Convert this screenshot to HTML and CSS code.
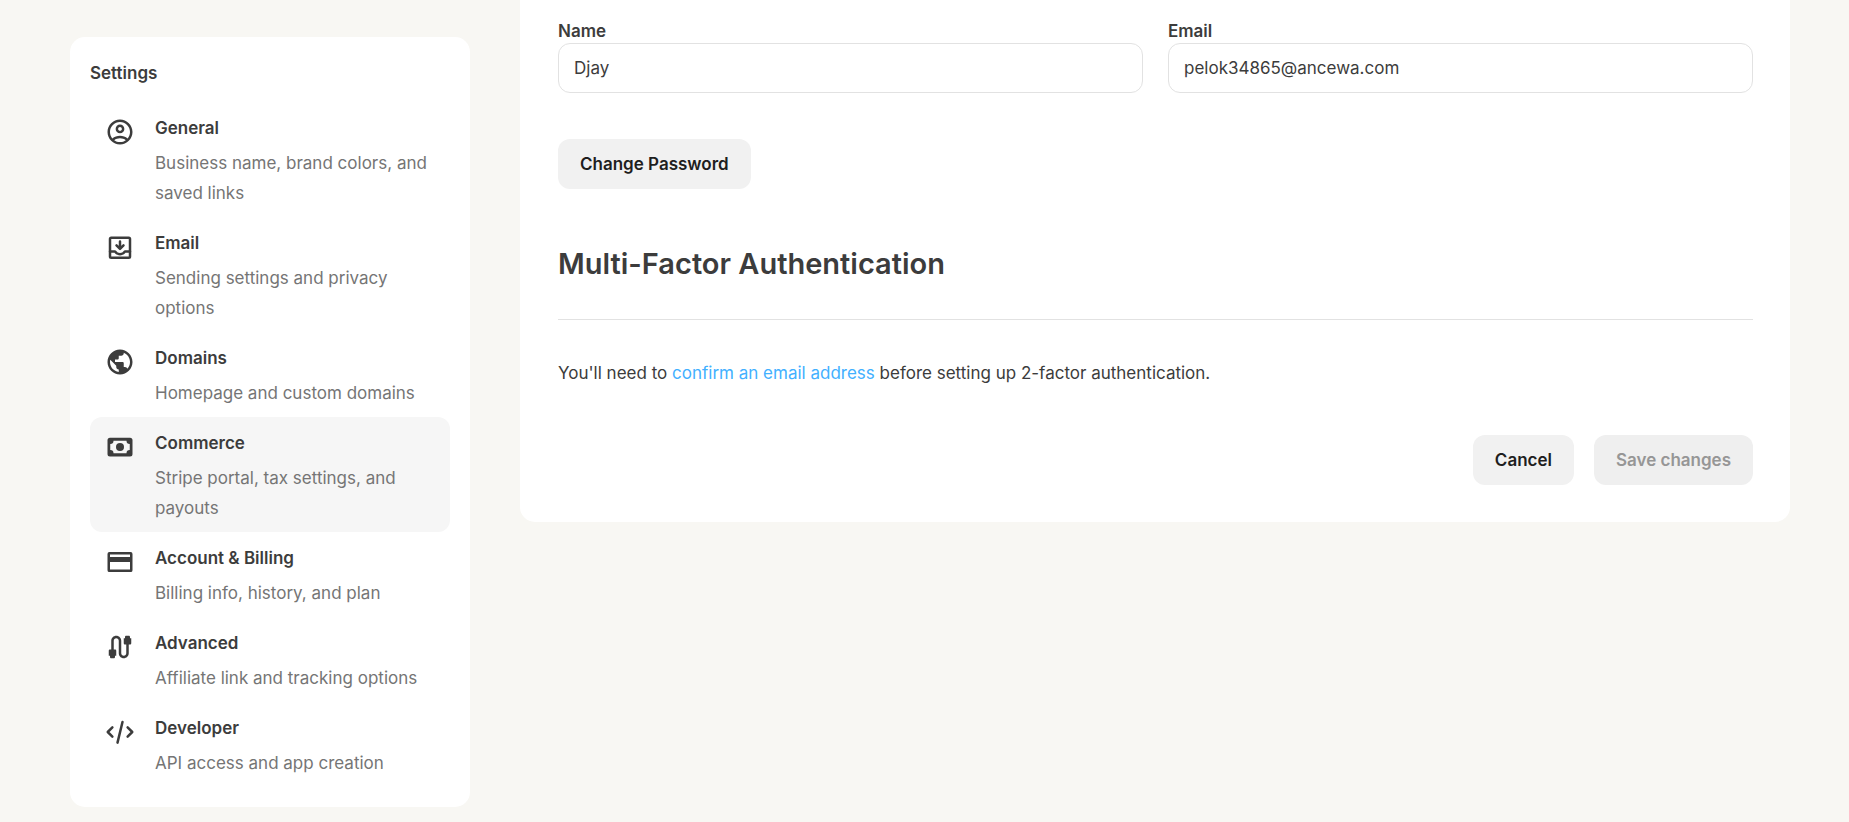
FILE: index.html
```html
<!DOCTYPE html>
<html lang="en">
<head>
    <meta charset="UTF-8">
    <meta name="viewport" content="width=device-width, initial-scale=1.0">
    <title>Settings</title>
    <link rel="stylesheet" href="styles.css">
</head>
<body>
    <div class="page">
        <nav class="sidebar">
            <h2>Settings</h2>
            <a class="nav-item" href="#general">
                <svg class="icon" viewBox="0 0 24 24"><path d="M12 2C6.48 2 2 6.48 2 12s4.48 10 10 10 10-4.48 10-10S17.52 2 12 2zM7.35 18.5C8.66 17.56 10.26 17 12 17s3.34.56 4.65 1.5C15.34 19.44 13.74 20 12 20s-3.34-.56-4.65-1.5zm10.79-1.38C16.45 15.8 14.32 15 12 15s-4.45.8-6.14 2.12C4.7 15.73 4 13.95 4 12c0-4.42 3.58-8 8-8s8 3.58 8 8c0 1.95-.7 3.73-1.86 5.12zM12 6c-1.93 0-3.5 1.57-3.5 3.5S10.07 13 12 13s3.5-1.57 3.5-3.5S13.93 6 12 6zm0 5c-.83 0-1.5-.67-1.5-1.5S11.17 8 12 8s1.5.67 1.5 1.5S12.83 11 12 11z"/></svg>
                <div>
                    <h3>General</h3>
                    <p>Business name, brand colors, and saved links</p>
                </div>
            </a>
            <a class="nav-item" href="#email-settings">
                <svg class="icon icon-line" viewBox="0 0 24 24"><rect x="4" y="4.5" width="16" height="16" rx="1"/><path d="M4 15.5h4c.9 1.4 2.2 2.2 4 2.2s3.1-.8 4-2.2h4M12 7.5V13M9.2 10.7l2.8 2.8 2.8-2.8"/></svg>
                <div>
                    <h3>Email</h3>
                    <p>Sending settings and privacy options</p>
                </div>
            </a>
            <a class="nav-item" href="#domains">
                <svg class="icon" viewBox="0 0 24 24"><path d="M12 2C6.48 2 2 6.48 2 12s4.48 10 10 10 10-4.48 10-10S17.52 2 12 2zm-1 17.93c-3.95-.49-7-3.85-7-7.93 0-.62.08-1.21.21-1.79L9 15v1c0 1.1.9 2 2 2v1.93zm6.9-2.54c-.26-.81-1-1.39-1.9-1.39h-1v-3c0-.55-.45-1-1-1H8v-2h2c.55 0 1-.45 1-1V7h2c1.1 0 2-.9 2-2v-.41c2.93 1.19 5 4.06 5 7.41 0 2.08-.8 3.97-2.1 5.39z"/></svg>
                <div>
                    <h3>Domains</h3>
                    <p>Homepage and custom domains</p>
                </div>
            </a>
            <a class="nav-item active" href="#commerce">
                <svg class="icon" viewBox="0 0 24 24"><path fill-rule="evenodd" d="M4 4.5h16a2 2 0 0 1 2 2v11a2 2 0 0 1-2 2H4a2 2 0 0 1-2-2v-11a2 2 0 0 1 2-2zM6.8 7A2.6 2.6 0 0 1 4.2 9.6v4.8A2.6 2.6 0 0 1 6.8 17h10.400a2.6 2.6 0 0 1 2.6-2.6V9.6A2.6 2.6 0 0 1 17.200 7z"/><circle cx="12" cy="12" r="3.2"/></svg>
                <div>
                    <h3>Commerce</h3>
                    <p>Stripe portal, tax settings, and payouts</p>
                </div>
            </a>
            <a class="nav-item" href="#billing">
                <svg class="icon" viewBox="0 0 24 24"><path fill-rule="evenodd" d="M3.5 4h17A1.5 1.5 0 0 1 22 5.5v13a1.5 1.5 0 0 1-1.5 1.5h-17A1.5 1.5 0 0 1 2 18.5v-13A1.5 1.5 0 0 1 3.5 4zM4 6v2h16V6zM4 12v6h16v-6z"/></svg>
                <div>
                    <h3>Account &amp; Billing</h3>
                    <p>Billing info, history, and plan</p>
                </div>
            </a>
            <a class="nav-item" href="#advanced">
                <svg class="icon" viewBox="0 0 24 24"><path d="M20 5V4c0-.55-.45-1-1-1h-2c-.55 0-1 .45-1 1v1h-1v4c0 .55.45 1 1 1h1v7c0 1.1-.9 2-2 2s-2-.9-2-2V7c0-2.21-1.79-4-4-4S5 4.79 5 7v7H4c-.55 0-1 .45-1 1v4h1v1c0 .55.45 1 1 1h2c.55 0 1-.45 1-1v-1h1v-4c0-.55-.45-1-1-1H7V7c0-1.1.9-2 2-2s2 .9 2 2v10c0 2.21 1.79 4 4 4s4-1.79 4-4v-7h1c.55 0 1-.45 1-1V5h-1z"/></svg>
                <div>
                    <h3>Advanced</h3>
                    <p>Affiliate link and tracking options</p>
                </div>
            </a>
            <a class="nav-item" href="#developer">
                <svg class="icon icon-line" viewBox="0 0 24 24"><path d="M5.9 8.3L2.2 12l3.7 3.7M18.1 8.3l3.7 3.7-3.7 3.7M14 4l-4 16.5"/></svg>
                <div>
                    <h3>Developer</h3>
                    <p>API access and app creation</p>
                </div>
            </a>
        </nav>

        <main class="card">
            <form>
                <div class="fields">
                    <div class="field">
                        <label for="name">Name</label>
                        <input type="text" id="name" value="Djay">
                    </div>
                    <div class="field">
                        <label for="email">Email</label>
                        <input type="email" id="email" value="pelok34865@ancewa.com">
                    </div>
                </div>
                <button class="btn password-btn" type="button">Change Password</button>

                <h1>Multi-Factor Authentication</h1>
                <p class="notice">You'll need to <a href="#confirm">confirm an email address</a> before setting up 2-factor authentication.</p>

                <div class="actions">
                    <button class="btn" type="button">Cancel</button>
                    <button class="btn" type="submit" disabled>Save changes</button>
                </div>
            </form>
        </main>
    </div>
</body>
</html>
```

FILE: styles.css
```css
* {
    box-sizing: border-box;
}
body {
    margin: 0;
    background-color: #f8f7f3;
    color: #3c3c3c;
    font-family: Inter, sans-serif;
    font-size: 17px;
    line-height: 30px;
}
h1, h2, h3, p {
    margin: 0;
}
h2, h3 {
    font-size: 17px;
    font-weight: 600;
}
a {
    color: #42b0ff;
    text-decoration: none;
}
.page {
    display: flex;
    align-items: flex-start;
    gap: 50px;
    padding: 0 59px 0 70px;
}

/* Sidebar */
.sidebar {
    flex: 0 0 400px;
    margin-top: 37px;
    padding: 21px 20px 20px;
    background: #fff;
    border-radius: 15px;
}
.sidebar h2 {
    margin-bottom: 14px;
}
.nav-item {
    display: flex;
    gap: 20px;
    padding: 11px 15px 9px;
    border-radius: 12px;
    color: #3c3c3c;
}
.nav-item.active,
.nav-item:hover {
    background: #f6f6f6;
}
.nav-item p {
    margin-top: 5px;
    color: #757575;
}
.icon {
    flex: none;
    width: 30px;
    height: 30px;
    margin-top: 4px;
    fill: currentColor;
}
.icon-line {
    fill: none;
    stroke: currentColor;
    stroke-width: 2;
    stroke-linecap: round;
    stroke-linejoin: round;
}

/* Profile form */
.card {
    flex: 1;
    min-width: 0;
    padding: 19px 37px 37px 38px;
    background: #fff;
    border-radius: 0 0 15px 15px;
}
.fields {
    display: grid;
    grid-template-columns: 1fr 1fr;
    gap: 25px;
}
.field label {
    display: block;
    font-weight: 600;
    line-height: 24px;
}
.field input {
    display: block;
    width: 100%;
    height: 50px;
    padding: 0 15px;
    border: 1px solid #e2e2e2;
    border-radius: 12px;
    background: #fff;
    color: inherit;
    font: inherit;
}
.btn {
    height: 50px;
    padding: 0 22px;
    border: none;
    border-radius: 12px;
    background: #f1f1f1;
    color: #1e1e1e;
    font: inherit;
    font-weight: 600;
    cursor: pointer;
}
.btn:disabled {
    background: #efefef;
    color: #969696;
    cursor: default;
}
.password-btn {
    display: block;
    margin-top: 46px;
}
h1 {
    margin-top: 55px;
    padding-bottom: 35px;
    border-bottom: 1px solid #e2e2e2;
    font-size: 29px;
    font-weight: 600;
    line-height: 40px;
}
.notice {
    margin-top: 38px;
}
.actions {
    display: flex;
    justify-content: flex-end;
    gap: 20px;
    margin-top: 47px;
}
```
